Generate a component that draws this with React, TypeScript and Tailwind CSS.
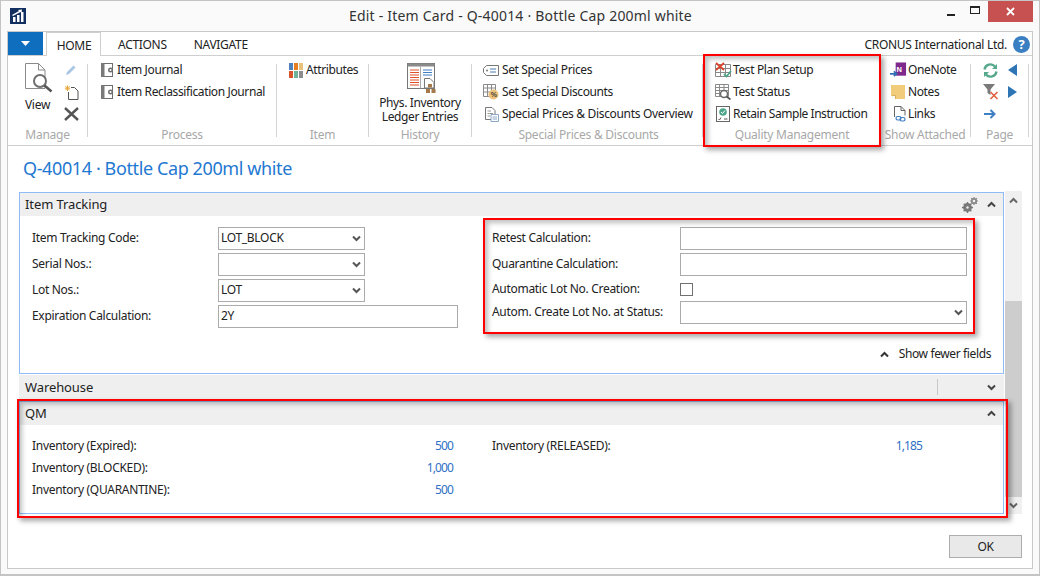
import type { ReactNode } from "react";

const font = "[font-family:'Noto_Sans',sans-serif]";

function Chevron({ up = false, color = "#444" }: { up?: boolean; color?: string }) {
  return (
    <svg width="9" height="7" viewBox="0 0 9 7" className="shrink-0">
      <polyline
        points={up ? "1,5.5 4.5,2 8,5.5" : "1,1.5 4.5,5 8,1.5"}
        fill="none"
        stroke={color}
        strokeWidth="2"
      />
    </svg>
  );
}

/* ---------- ribbon icons ---------- */
function LogoIcon() {
  return (
    <svg width="16" height="16" viewBox="0 0 16 16">
      <rect width="16" height="16" fill="#12305f" />
      <rect x="3" y="9" width="2.5" height="5" fill="#fff" />
      <rect x="7" y="7" width="2.5" height="7" fill="#fff" />
      <rect x="11" y="4" width="2.5" height="10" fill="#fff" />
      <path d="M2 7 L9 3 L8 2 L12 1.5 L11.5 5 L10.5 4 L3 8 Z" fill="#fff" />
    </svg>
  );
}

function ViewIcon() {
  return (
    <svg width="28" height="30" viewBox="0 0 28 30">
      <path d="M0.5 0.500H13.500L20 7V25.500H0.500ZM13.500 0.500V7H20" fill="#fff" stroke="#8a8a8a" strokeWidth="1" />
      <circle cx="15" cy="18" r="6" fill="#fff" stroke="#6f6f6f" strokeWidth="2" />
      <path d="M19.5 22.5 L26.500 28.5" stroke="#555" strokeWidth="2.5" />
    </svg>
  );
}

function PencilIcon() {
  return (
    <svg width="12" height="12" viewBox="0 0 12 12">
      <path d="M1 11 L2 8 L8.5 1.5 L10.5 3.5 L4 10 Z" fill="#a9c6e3" />
    </svg>
  );
}

function NewIcon() {
  return (
    <svg width="15" height="15" viewBox="0 0 15 15">
      <path d="M7 2.500H10.500L14 6V14.500H4.500V7" fill="#fff" stroke="#555" strokeWidth="1" />
      <path d="M3.500 0.500V6M0.800 3.200H6.200M1.500 1.200L5.500 5.200M5.500 1.200L1.500 5.200" stroke="#e9a93a" strokeWidth="1" />
    </svg>
  );
}

function DeleteIcon() {
  return (
    <svg width="15" height="14" viewBox="0 0 15 14">
      <path d="M1 1 L14 13 M14 1 L1 13" stroke="#555" strokeWidth="2.4" />
    </svg>
  );
}

function JournalIcon() {
  return (
    <svg width="13" height="14" viewBox="0 0 13 14">
      <rect x="0.500" y="0.500" width="11" height="13" fill="#fff" stroke="#6e6e6e" />
      <rect x="0" y="0" width="3.500" height="14" fill="#7a7a7a" />
      <circle cx="9.500" cy="7" r="2.500" fill="#6e6e6e" />
      <circle cx="9.500" cy="7" r="1" fill="#fff" />
    </svg>
  );
}

function AttributesIcon() {
  const colors = ["#4f81bd", "#e67e22", "#e8c27c", "#d9542b", "#6fb29a", "#8c8c8c"];
  return (
    <div className="grid grid-cols-3 gap-px w-[14px] h-[15px]">
      {colors.map((c) => (
        <div key={c} className="w-[4px] h-[7px]" style={{ background: c }} />
      ))}
    </div>
  );
}

function LedgerIcon() {
  return (
    <svg width="31" height="31" viewBox="0 0 31 31">
      <rect x="0.500" y="0.500" width="27" height="25" fill="#fff" stroke="#777" />
      <rect x="0.500" y="0.500" width="27" height="3" fill="#8a8a8a" />
      <path d="M13.500 3.500V25.500" stroke="#aaa" />
      <path d="M3 7H12M3 9.500H12M3 12H12M3 14.500H12M3 17H12M3 19.500H12M3 22H12" stroke="#e0502a" strokeWidth="1.200" />
      <path d="M16 7H25M16 9.500H25M16 12H25" stroke="#3f7fc4" strokeWidth="1.200" />
      <path d="M17.500 15.500H23L27 19.500V25H17.500Z" fill="#fff" stroke="#777" />
      <rect x="21" y="21" width="4" height="3.500" fill="#a5794a" />
      <rect x="19" y="26" width="4" height="4" fill="#a5794a" />
      <rect x="24.500" y="26" width="4" height="4" fill="#a5794a" />
    </svg>
  );
}

function PriceIcon() {
  return (
    <svg width="16" height="11" viewBox="0 0 16 11">
      <path d="M3.500 0.500H15.500V10.500H3.500L0.500 7.500V3.500Z" fill="#fff" stroke="#777" />
      <circle cx="4" cy="5.500" r="1" fill="#777" />
      <path d="M7 4H13M7 7H13" stroke="#4a7fb5" />
    </svg>
  );
}

function DiscountIcon() {
  return (
    <svg width="16" height="16" viewBox="0 0 16 16">
      <path d="M0.500 0.500H12.500V12.500H0.500ZM0.500 4H12.500M0.500 8H12.500M4.500 0.500V12.500M8.500 0.500V12.500" fill="#fff" stroke="#8a8a8a" />
      <circle cx="10.500" cy="10.500" r="5" fill="#eec27a" />
      <text x="7.700" y="13" fontSize="7" fontWeight="700" fill="#444" fontFamily="Liberation Sans">%</text>
    </svg>
  );
}

function OverviewIcon() {
  return (
    <svg width="16" height="15" viewBox="-2 0 16 15">
      <path d="M0.500 0.500H7L10 3.500V12.500H0.500Z" fill="#fff" stroke="#777" />
      <path d="M2.500 4H6M2.500 6.500H8M2.500 9H5" stroke="#999" />
      <path d="M6 7.500H13.500V14.500H6Z" fill="#fff" stroke="#8aa6c4" />
      <path d="M7.500 10H12M7.500 12H12" stroke="#8aa6c4" />
    </svg>
  );
}

function PlanIcon() {
  return (
    <svg width="17" height="16" viewBox="0 0 17 16">
      <path d="M0.500 2.500H15.500V14.500H0.500ZM0.500 6.500H15.500M0.500 10.500H15.500M5.500 2.500V14.500M10.500 2.500V14.500" fill="#fff" stroke="#888" />
      <path d="M1 1 L9 8 M9 1 L1 8" stroke="#d9442b" strokeWidth="1.800" />
      <path d="M9 12 L11.500 14.500 L16 9" fill="none" stroke="#4da58a" strokeWidth="1.800" />
    </svg>
  );
}

function StatusIcon() {
  return (
    <svg width="16" height="16" viewBox="0 0 16 16">
      <path d="M0.500 0.500H13.500V12.500H0.500ZM0.500 3.500H13.500M0.500 6.500H13.500M0.500 9.500H13.500M4.500 0.500V12.500M9 0.500V12.500" fill="#fff" stroke="#8a8a8a" />
      <circle cx="9" cy="10" r="3.500" fill="#fff" stroke="#666" strokeWidth="1.400" />
      <path d="M11.500 12.500 L15.500 15.500" stroke="#555" strokeWidth="1.800" />
    </svg>
  );
}

function RetainIcon() {
  return (
    <svg width="14" height="16" viewBox="0 0 14 16" className="ml-[1px]">
      <rect x="0.500" y="0.500" width="13" height="15" fill="#fff" stroke="#666" />
      <circle cx="7" cy="6" r="3.800" fill="#4da58a" />
      <path d="M5 6 L6.500 7.500 L9 4.500" fill="none" stroke="#fff" />
      <path d="M2.500 13 L3.500 14 L5 11.500 M8 13H11.500" fill="none" stroke="#555" />
    </svg>
  );
}

function OneNoteIcon() {
  return (
    <svg width="17" height="17" viewBox="0 0 18 17">
      <rect x="6" y="0" width="11" height="14" fill="#7d2a8c" />
      <text x="7" y="10" fontSize="8" fontWeight="700" fill="#fff" fontFamily="Liberation Sans">N</text>
      <path d="M0 12H6M4 9.500L7 12L4 14.500" fill="none" stroke="#2f6fb5" strokeWidth="1.800" />
    </svg>
  );
}

function NotesIcon() {
  return (
    <svg width="15" height="14" viewBox="-1 0 15 14">
      <path d="M0 0H14V14H4L0 10Z" fill="#f1cd7b" />
      <path d="M0 10H4V14Z" fill="#fff" />
      <path d="M0.500 10.500H4.500V14" fill="none" stroke="#d9b25f" />
    </svg>
  );
}

function LinksIcon() {
  return (
    <svg width="17" height="16" viewBox="-3 0 17 16">
      <path d="M1.500 11V0.500H8L12 4.500V9.500M8 0.500V4.500H12" fill="#fff" stroke="#666" />
      <rect x="3" y="10.500" width="5" height="3.500" rx="1.700" fill="none" stroke="#3f7fc4" strokeWidth="1.200" />
      <rect x="7" y="11.500" width="5" height="3.500" rx="1.700" fill="none" stroke="#3f7fc4" strokeWidth="1.200" />
    </svg>
  );
}

function RefreshIcon() {
  return (
    <svg width="15" height="15" viewBox="0 0 15 15">
      <path d="M1.500 6.500A6 6 0 0 1 12 3.500M13.500 8.500A6 6 0 0 1 3 11.500" fill="none" stroke="#55a88c" strokeWidth="2.400" />
      <path d="M14 1V6H9ZM1 14V9H6Z" fill="#55a88c" />
    </svg>
  );
}

function FilterClearIcon() {
  return (
    <svg width="16" height="16" viewBox="0 0 16 16">
      <path d="M0 0H12L7.500 5.500V11L4.500 9V5.500Z" fill="#7a7a7a" />
      <path d="M7.500 8 L14.500 15 M14.500 8 L7.500 15" stroke="#e2603f" strokeWidth="1.600" />
    </svg>
  );
}

function TriangleIcon({ left = false }: { left?: boolean }) {
  return (
    <svg width="9" height="12" viewBox="0 0 9 12">
      <path d={left ? "M9 0V12L0 6Z" : "M0 0V12L9 6Z"} fill="#2e75b6" />
    </svg>
  );
}

function ArrowIcon() {
  return (
    <svg width="12" height="10" viewBox="0 0 12 10">
      <path d="M0 5H10M6.500 1L10.500 5L6.500 9" fill="none" stroke="#3f7fc4" strokeWidth="2" />
    </svg>
  );
}

function GearsIcon() {
  return (
    <svg width="16" height="16" viewBox="0 0 16 16">
      <circle cx="5.500" cy="10.500" r="3.200" fill="#fff" stroke="#777" strokeWidth="2.400" />
      <path d="M5.500 5V16M0 10.500H11M1.700 6.700L9.300 14.300M9.300 6.700L1.700 14.300" stroke="#777" strokeWidth="1.400" />
      <circle cx="5.500" cy="10.500" r="1.200" fill="#efefef" />
      <circle cx="12" cy="4" r="2.200" fill="#efefef" stroke="#8a8a8a" strokeWidth="1.800" />
      <path d="M12 0V2M12 6V8M8 4H10M14 4H16M9.200 1.200L10.500 2.500M14.800 1.200L13.500 2.500M9.200 6.800L10.500 5.500M14.800 6.800L13.500 5.500" stroke="#8a8a8a" strokeWidth="1.200" />
    </svg>
  );
}

function HelpIcon() {
  return (
    <div className="w-[17px] h-[17px] mt-[1px] rounded-full bg-[#3a7fc1] text-white flex items-center justify-center text-[13px] font-bold leading-none">
      ?
    </div>
  );
}

/* ---------- ribbon pieces ---------- */
function RibbonItem({
  icon,
  label,
  iconWidth = 16,
  spacing = "tracking-[-0.38px]",
}: {
  icon: ReactNode;
  label: string;
  iconWidth?: number;
  spacing?: string;
}) {
  return (
    <div className={`h-[22px] flex items-center whitespace-nowrap ${spacing}`}>
      <div className="flex items-center shrink-0" style={{ width: iconWidth }}>
        {icon}
      </div>
      <span>{label}</span>
    </div>
  );
}

function Group({
  title,
  width,
  children,
  pad = 0,
  titlePad = 0,
}: {
  title: string;
  width: number;
  children: ReactNode;
  pad?: number;
  titlePad?: number;
}) {
  return (
    <div className="flex shrink-0" style={{ width }}>
      <div className="flex-1 min-w-0 flex flex-col">
        <div className="h-[69px] pt-[3px]" style={{ paddingLeft: pad }}>
          {children}
        </div>
        <div
          className="text-center text-[#a8a8a8] leading-[20px] whitespace-nowrap tracking-[-0.25px]"
          style={{ paddingLeft: titlePad }}
        >
          {title}
        </div>
      </div>
      <div className="w-px my-[8px] bg-[#d4d4d4] shrink-0" />
    </div>
  );
}

/* ---------- form pieces ---------- */
function Select({ value = "", width }: { value?: string; width: string }) {
  return (
    <div className={`h-[23px] ${width} border border-[#ababab] bg-white flex items-center justify-between pl-[2px] pr-[3px]`}>
      <span>{value}</span>
      <Chevron color="#555" />
    </div>
  );
}

function Input({ value = "", width }: { value?: string; width: string }) {
  return (
    <div className={`h-[23px] ${width} border border-[#ababab] bg-white flex items-center pl-[2px]`}>{value}</div>
  );
}

function Row({
  label,
  labelWidth,
  short = false,
  children,
}: {
  label: string;
  labelWidth: string;
  short?: boolean;
  children: ReactNode;
}) {
  return (
    <div className={short ? "h-[22px] pt-[2px] flex items-center" : "h-[26px] flex items-center"}>
      <div className={`${labelWidth} shrink-0 whitespace-nowrap`}>{label}</div>
      {children}
    </div>
  );
}

function QmRow({ label, value }: { label: string; value?: string }) {
  return (
    <div className="h-[22px] flex items-center justify-between">
      <span>{label}</span>
      <span className="text-[#2f6fc6] tracking-[-0.9px] mr-[1px]">{value}</span>
    </div>
  );
}

export default function App() {
  return (
    <div className={`relative w-[1040px] h-[576px] overflow-hidden bg-[#fafafa] border border-[#c4c4c4] border-b-2 text-[12px] text-[#222] tracking-[-0.3px] ${font}`}>
      {/* title bar */}
      <div className="h-[30px] pl-[9px] flex items-center relative">
        <LogoIcon />
        <div className="flex-1 text-center text-[14px] text-[#333] tracking-[0.2px] pr-[24px] pb-[2px]">
          Edit - Item Card - Q-40014 · Bottle Cap 200ml white
        </div>
        <div className="absolute right-[6px] top-0 h-[21px] flex items-center">
          <div className="w-[8px] h-[2px] bg-[#222] mt-[6px] mr-[15px]" />
          <div className="w-[10px] h-[8px] border border-t-2 border-[#222] mr-[8px] -mt-[4px]" />
          <div className="w-[45px] h-[21px] bg-[#c75050] flex items-center justify-center">
            <svg width="9" height="9" viewBox="0 0 9 9">
              <path d="M1 1L8 8M8 1L1 8" stroke="#fff" strokeWidth="1.800" />
            </svg>
          </div>
        </div>
      </div>

      {/* client frame */}
      <div className="mx-[6px] h-[538px] border border-[#c9c9c9] bg-white flex flex-col">
        {/* tabs */}
        <div className="h-[24px] flex items-end border-b border-[#cfcfcf] shrink-0">
          <div className="h-[23px] w-[35px] bg-[#106ebe] flex items-center justify-center">
            <svg width="9" height="5" viewBox="0 0 9 5">
              <path d="M0 0H9L4.500 5Z" fill="#fff" />
            </svg>
          </div>
          <div className="ml-[3px] h-[24px] -mb-px w-[55px] pt-[2px] pl-[1px] border border-b-0 border-[#cfcfcf] bg-white flex items-center justify-center">
            HOME
          </div>
          <div className="ml-[17px] leading-[20px]">ACTIONS</div>
          <div className="ml-[27px] leading-[20px]">NAVIGATE</div>
          <div className="ml-auto flex items-center h-[23px] pr-[2px]">
            <span className="mr-[6px] pt-[3px]">CRONUS International Ltd.</span>
            <HelpIcon />
          </div>
        </div>

        {/* ribbon */}
        <div className="h-[90px] flex border-b border-[#cfcfcf] shrink-0">
          <Group title="Manage" width={80}>
            <div className="flex pl-[6px]">
              <div className="w-[47px] flex flex-col items-center">
                <div className="h-[33px] pt-[4px] pl-[2px]">
                  <ViewIcon />
                </div>
                <div className="leading-[17px] mt-[4px]">View</div>
              </div>
              <div className="w-[20px] flex flex-col items-center">
                <div className="h-[22px] flex items-center">
                  <PencilIcon />
                </div>
                <div className="h-[22px] flex items-center">
                  <NewIcon />
                </div>
                <div className="h-[22px] flex items-center">
                  <DeleteIcon />
                </div>
              </div>
            </div>
          </Group>
          <Group title="Process" width={189} pad={13}>
            <RibbonItem icon={<JournalIcon />} label="Item Journal" />
            <RibbonItem icon={<JournalIcon />} label="Item Reclassification Journal" />
          </Group>
          <Group title="Item" width={92} pad={12}>
            <RibbonItem icon={<AttributesIcon />} label="Attributes" iconWidth={17} />
          </Group>
          <Group title="History" width={103}>
            <div className="flex flex-col items-center leading-[14px] text-center tracking-[-0.38px]">
              <div className="h-[37px] pt-[4px] pl-[4px]">
                <LedgerIcon />
              </div>
              <div>Phys. Inventory</div>
              <div>Ledger Entries</div>
            </div>
          </Group>
          <Group title="Special Prices & Discounts" width={231} pad={11} titlePad={3}>
            <RibbonItem icon={<PriceIcon />} label="Set Special Prices" iconWidth={19} />
            <RibbonItem icon={<DiscountIcon />} label="Set Special Discounts" iconWidth={19} />
            <RibbonItem
              icon={<OverviewIcon />}
              label="Special Prices & Discounts Overview"
              iconWidth={19}
              spacing="tracking-[-0.33px]"
            />
          </Group>
          <Group title="Quality Management" width={177} pad={12} titlePad={2}>
            <RibbonItem icon={<PlanIcon />} label="Test Plan Setup" iconWidth={18} />
            <RibbonItem icon={<StatusIcon />} label="Test Status" iconWidth={18} />
            <RibbonItem
              icon={<RetainIcon />}
              label="Retain Sample Instruction"
              iconWidth={18}
              spacing="tracking-[-0.45px]"
            />
          </Group>
          <Group title="Show Attached" width={91} pad={10}>
            <RibbonItem icon={<OneNoteIcon />} label="OneNote" iconWidth={18} />
            <RibbonItem icon={<NotesIcon />} label="Notes" iconWidth={18} />
            <RibbonItem icon={<LinksIcon />} label="Links" iconWidth={18} />
          </Group>
          <Group title="Page" width={58}>
            <div className="grid grid-cols-[25px_9px] pl-[12px]">
              <div className="h-[22px] flex items-center"><RefreshIcon /></div>
              <div className="h-[22px] flex items-center"><TriangleIcon left /></div>
              <div className="h-[22px] flex items-center"><FilterClearIcon /></div>
              <div className="h-[22px] flex items-center"><TriangleIcon /></div>
              <div className="h-[22px] flex items-center pl-[1px]"><ArrowIcon /></div>
            </div>
          </Group>
        </div>

        {/* page title */}
        <div className="h-[45px] pl-[15px] pt-[9px] text-[18px] leading-[26px] text-[#1f78d1] tracking-[-0.39px] shrink-0">
          Q-40014 · Bottle Cap 200ml white
        </div>

        {/* fast tabs + scrollbar */}
        <div className="pl-[11px] flex h-[323px] shrink-0">
          <div className="w-[985px] shrink-0">
            {/* Item Tracking */}
            <div className="h-[182px] border border-[#8fbcf6] mt-[1px]">
              <div className="h-[23px] bg-[#efefef] flex items-center pl-[5px] pr-[7px] text-[13px] tracking-[-0.1px]">
                <span>Item Tracking</span>
                <div className="ml-auto flex items-center gap-[9px]">
                  <GearsIcon />
                  <Chevron up />
                </div>
              </div>
              <div className="flex pt-[9px]">
                <div className="w-[472px] pl-[12px]">
                  <Row label="Item Tracking Code:" labelWidth="w-[186px]">
                    <Select value="LOT_BLOCK" width="w-[147px]" />
                  </Row>
                  <Row label="Serial Nos.:" labelWidth="w-[186px]">
                    <Select width="w-[147px]" />
                  </Row>
                  <Row label="Lot Nos.:" labelWidth="w-[186px]">
                    <Select value="LOT" width="w-[147px]" />
                  </Row>
                  <Row label="Expiration Calculation:" labelWidth="w-[186px]">
                    <Input value="2Y" width="w-[240px]" />
                  </Row>
                </div>
                <div className="flex-1">
                  <Row label="Retest Calculation:" labelWidth="w-[188px]">
                    <Input width="w-[287px]" />
                  </Row>
                  <Row label="Quarantine Calculation:" labelWidth="w-[188px]">
                    <Input width="w-[287px]" />
                  </Row>
                  <Row short label="Automatic Lot No. Creation:" labelWidth="w-[188px]">
                    <div className="w-[13px] h-[13px] border border-[#707070] bg-white" />
                  </Row>
                  <Row label="Autom. Create Lot No. at Status:" labelWidth="w-[188px]">
                    <Select width="w-[287px]" />
                  </Row>
                </div>
              </div>
              <div className="flex items-center justify-end gap-[10px] pr-[12px] mt-[17px] h-[16px]">
                <Chevron up color="#333" />
                <span className="tracking-[-0.38px]">Show fewer fields</span>
              </div>
            </div>

            {/* Warehouse */}
            <div className="h-[24px] bg-[#efefef] mt-[1px] flex items-center pl-[6px] pr-[8px] text-[13px] tracking-[-0.1px]">
              <span className="pt-[1px]">Warehouse</span>
              <div className="ml-auto flex items-center">
                <div className="w-px h-[16px] bg-[#c8c8c8] mr-[49px]" />
                <Chevron />
              </div>
            </div>

            {/* QM */}
            <div className="h-[113px] border border-[#8fbcf6] mt-[2px]">
              <div className="h-[23px] bg-[#efefef] flex items-center justify-between pl-[5px] pr-[7px] text-[13px] tracking-[-0.1px]">
                <span>QM</span>
                <Chevron up />
              </div>
              <div className="flex pt-[10px]">
                <div className="w-[422px] ml-[12px] shrink-0">
                  <QmRow label="Inventory (Expired):" value="500" />
                  <QmRow label="Inventory (BLOCKED):" value="1,000" />
                  <QmRow label="Inventory (QUARANTINE):" value="500" />
                </div>
                <div className="w-[431px] ml-[38px] shrink-0">
                  <QmRow label="Inventory (RELEASED):" value="1,185" />
                </div>
              </div>
            </div>
          </div>

          {/* scrollbar */}
          <div className="w-[17px] ml-[1px] bg-[#f0f0f0] flex flex-col items-center shrink-0">
            <div className="h-[110px] pt-[6px]">
              <Chevron up color="#666" />
            </div>
            <div className="w-full h-[196px] bg-[#cdcdcd]" />
            <div className="pt-[5px]">
              <Chevron color="#666" />
            </div>
          </div>
        </div>

        {/* footer */}
        <div className="flex-1 flex justify-end pr-[10px] pt-[21px]">
          <div className="w-[73px] h-[23px] border border-[#adadad] bg-[#e9e9e9] flex items-center justify-center">
            OK
          </div>
        </div>
      </div>

      {/* red annotation boxes */}
      <div className="absolute left-[702px] top-[53px] w-[178px] h-[93px] border-[2px] border-[#f00] shadow-[3px_3px_5px_rgba(0,0,0,0.35),inset_3px_3px_5px_rgba(0,0,0,0.25)] pointer-events-none" />
      <div className="absolute left-[482px] top-[217px] w-[492px] h-[116px] border-[2px] border-[#f00] shadow-[3px_3px_5px_rgba(0,0,0,0.35),inset_3px_3px_5px_rgba(0,0,0,0.25)] pointer-events-none" />
      <div className="absolute left-[16px] top-[398px] w-[991px] h-[119px] border-[2px] border-[#f00] shadow-[3px_3px_5px_rgba(0,0,0,0.35),inset_3px_3px_5px_rgba(0,0,0,0.25)] pointer-events-none" />
    </div>
  );
}
